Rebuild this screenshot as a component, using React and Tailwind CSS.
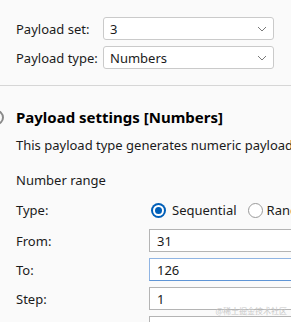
import React from 'react';

function Chevron() {
  return (
    <svg width="10" height="6" viewBox="0 0 10 6" className="shrink-0">
      <polyline points="1,1 5,5 9,1" fill="none" stroke="#7a7a7a" strokeWidth="1" />
    </svg>
  );
}

function Select({ value }) {
  return (
    <div className="h-[23px] flex items-center justify-between bg-white border border-[#cacaca] rounded-[3px] pl-[6px] pr-[6px]">
      <span>{value}</span>
      <Chevron />
    </div>
  );
}

function Field({ label, value, focused }) {
  return (
    <div className="flex items-center h-[23px]">
      <span className="w-[133px] shrink-0">{label}</span>
      <div
        className={
          focused
            ? 'h-[23px] w-[220px] shrink-0 flex items-center pl-[7px] bg-white border border-[#8fb4e3] border-b-[#5f95d6]'
            : 'h-[23px] w-[220px] shrink-0 flex items-center pl-[7px] bg-white border border-[#b4b4b4]'
        }
      >
        {value}
      </div>
    </div>
  );
}

export default function App() {
  return (
    <div className="relative w-[291px] h-[322px] overflow-hidden bg-[#fafafa] text-[13px] leading-[18px] text-[#1b1b1b] font-['Noto_Sans',sans-serif]">
      <div className="pl-4 pr-[17px] pt-[17px] grid grid-cols-[87px_1fr] gap-y-[6px] items-center">
        <span>Payload set:</span>
        <Select value="3" />
        <span>Payload type:</span>
        <Select value="Numbers" />
      </div>

      <div className="mt-4 h-px bg-[#d6d6d6]" />

      <div className="px-4">
        <div className="mt-[21px] flex items-center">
          <div className="w-[15px] h-[15px] rounded-full border-2 border-[#8a8a8a] -ml-[27px] mr-[12px] shrink-0" />
          <h2 className="text-[15px] leading-[20px] font-bold text-black whitespace-nowrap">Payload settings [Numbers]</h2>
        </div>

        <p className="mt-[9px] whitespace-nowrap">This payload type generates numeric payloads within a given range and in a specified format.</p>

        <p className="mt-[17px]">Number range</p>

        <div className="mt-[10px] flex items-center h-[22px] whitespace-nowrap">
          <span className="w-[135px] shrink-0">Type:</span>
          <div className="w-[15px] h-[15px] rounded-full bg-[#005fb8] flex items-center justify-center shrink-0">
            <div className="w-[11px] h-[11px] rounded-full bg-white flex items-center justify-center">
              <div className="w-[7px] h-[7px] rounded-full bg-[#005fb8]" />
            </div>
          </div>
          <span className="ml-[6px]">Sequential</span>
          <div className="ml-[11px] w-[15px] h-[15px] rounded-full border border-[#9a9a9a] bg-white shrink-0" />
          <span className="ml-[4px]">Random</span>
        </div>

        <div className="mt-[8px] flex flex-col gap-[6px]">
          <Field label="From:" value="31" />
          <Field label="To:" value="126" focused />
          <Field label="Step:" value="1" />
          <Field label="" value="" />
        </div>
      </div>

      <span className="absolute right-[4px] bottom-[6px] text-[8px] leading-[10px] text-[#c9c9c9] font-['Noto_Sans_CJK_SC',sans-serif]">@稀土掘金技术社区</span>
    </div>
  );
}
